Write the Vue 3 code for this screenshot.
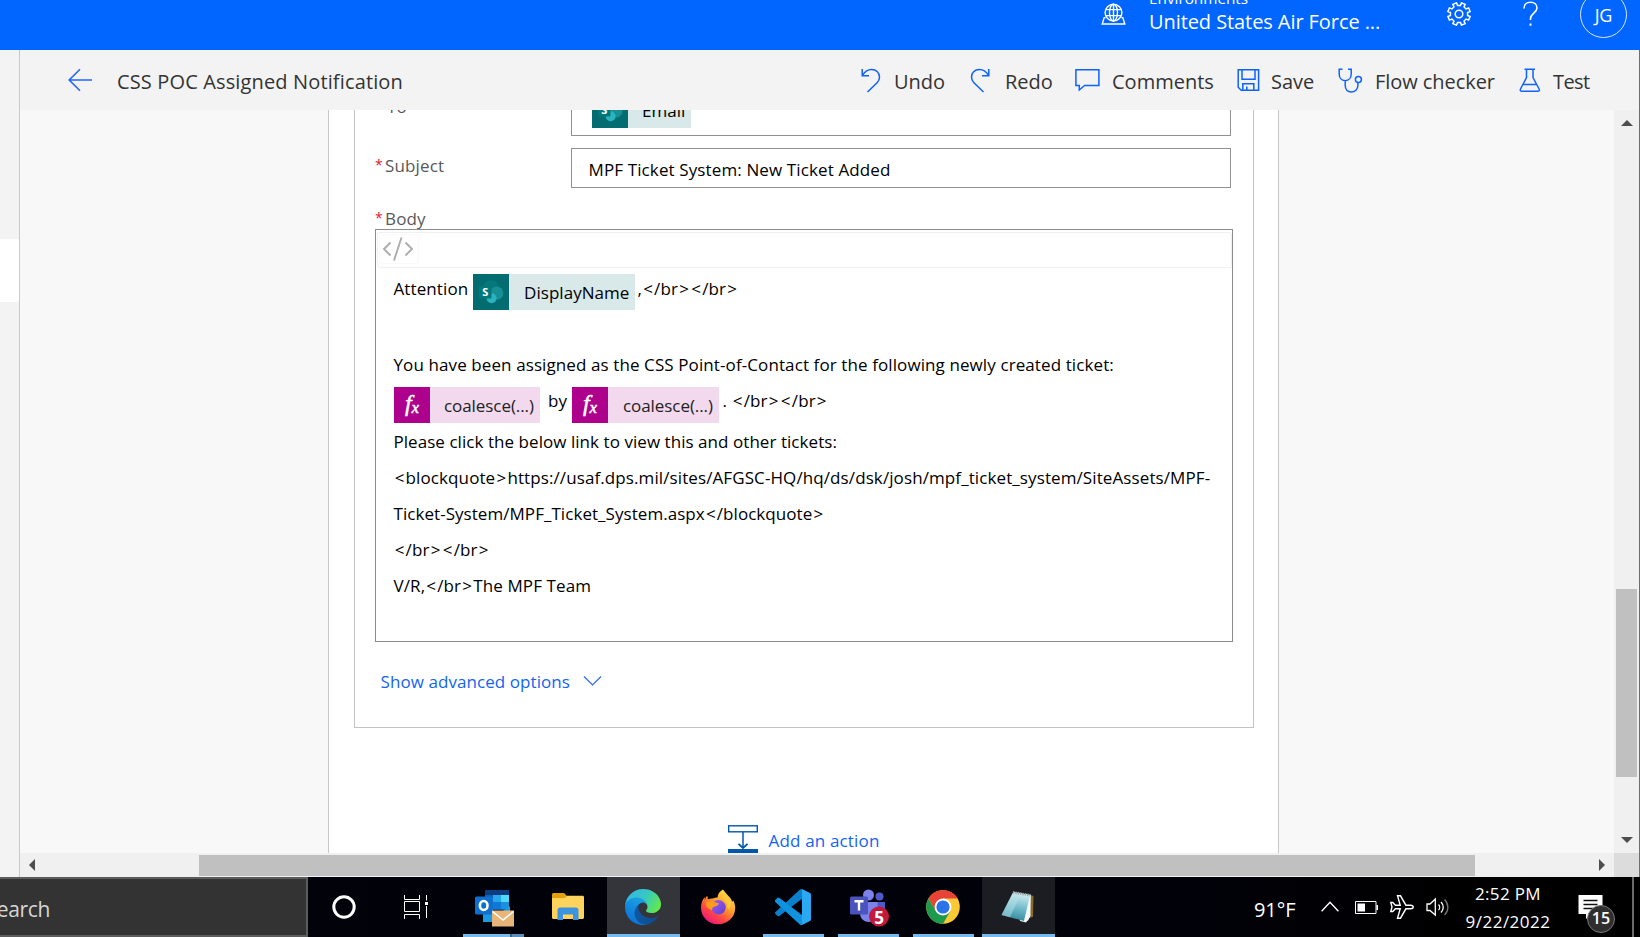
<script setup>
import { h } from 'vue'

const split = (s) => s.split(/([<>])/).filter(Boolean)

const Markup = (props) =>
  h('span', { class: 'markup' }, split(props.text).map((p) =>
    p === '<' || p === '>' ? h('span', { class: 'angle' }, p) : p))
Markup.props = ['text']

const paragraphs = [
  { text: 'Please click the below link to view this and other tickets:', tight: true },
  { text: '<blockquote>https://usaf.dps.mil/sites/AFGSC-HQ/hq/ds/dsk/josh/mpf_ticket_system/SiteAssets/MPF-' },
  { text: 'Ticket-System/MPF_Ticket_System.aspx</blockquote>', tight: true },
  { text: '</br></br>' },
  { text: 'V/R,</br>The MPF Team' }
]

const gear = (() => {
  const pts = []
  for (let k = 0; k < 8; k++) {
    const c = (k + 0.5) * 45
    for (const [r, d] of [[8.7, -13], [11.4, -10], [11.4, 10], [8.7, 13]]) {
      const a = ((c + d) * Math.PI) / 180
      pts.push((12 + r * Math.cos(a)).toFixed(2) + ',' + (12 + r * Math.sin(a)).toFixed(2))
    }
  }
  return pts.join(' ')
})()
</script>

<template>
  <div class="screen">
    <header class="top">
      <svg class="globe" width="26" height="24" viewBox="0 0 26 24">
        <g fill="none" stroke="#fff" stroke-width="1.4">
          <circle cx="12.5" cy="9.6" r="8.4" />
          <ellipse cx="12.5" cy="9.6" rx="4" ry="8.4" />
          <path d="M12.5 1.2v16.8M5 6.6h15M5 12.6h15M4.6 14.6H3.2L1.2 21h22.6l-2-6.4h-1.4" />
        </g>
      </svg>
      <div class="env">
        <div class="env-label">Environments</div>
        <div class="env-name">United States Air Force ...</div>
      </div>
      <svg class="gear" width="24" height="24" viewBox="0 0 24 24">
        <g fill="none" stroke="#fff" stroke-width="1.5">
          <polygon :points="gear" />
          <circle cx="12" cy="12" r="3.8" />
        </g>
      </svg>
      <svg class="help" width="17" height="26" viewBox="0 0 17 26">
        <path d="M2 7.4C2 3.6 4.600 1.200 8.500 1.200s6.500 2.400 6.500 5.800c0 5-6.500 5.400-6.500 10.600v1.400" fill="none" stroke="#fff" stroke-width="1.6" />
        <rect x="7.500" y="22.500" width="2" height="2.200" fill="#fff" />
      </svg>
      <div class="avatar">JG</div>
    </header>

    <div class="main">
      <nav class="rail"><div class="rail-active"></div></nav>

      <div class="work">
        <div class="bar">
          <svg class="back" width="25" height="24" viewBox="0 0 25 24">
            <path d="M24 12H1.200M12 1.200L1.200 12L12 22.800" fill="none" stroke="#2266fb" stroke-width="1.6" />
          </svg>
          <span class="title">CSS POC Assigned Notification</span>

          <svg class="i-undo" width="20" height="25" viewBox="0 0 20 25">
            <path d="M1.200 1v6.700H8M1.500 7.300C3.800 3.600 6.700 1.500 10.500 1.500c5 0 8 3.300 8 7.600 0 2.200-.8 4-2.400 5.600L6.500 24" />
          </svg>
          <span class="lbl undo">Undo</span>
          <svg class="i-redo" width="20" height="25" viewBox="0 0 20 25">
            <path d="M18.800 1v6.700H12M18.500 7.300C16.200 3.600 13.300 1.500 9.500 1.500c-5 0-8 3.300-8 7.600 0 2.200.8 4 2.400 5.600L13.500 24" />
          </svg>
          <span class="lbl redo">Redo</span>
          <svg class="i-com" width="25" height="25" viewBox="0 0 25 25">
            <path d="M.9 1.700h23v15.800H9.600L4.300 22v-4.500H.9z" />
          </svg>
          <span class="lbl comments">Comments</span>
          <svg class="i-save" width="23" height="25" viewBox="0 0 23 25">
            <path d="M1.200 1.700h20.400v20.500H4.200l-3-3zM5 1.700v9.500h13V1.700M5.800 22.200v-6.500h11v6.500M9.800 18.500v3.700" />
          </svg>
          <span class="lbl save">Save</span>
          <svg class="i-flow" width="26" height="26" viewBox="0 0 26 26">
            <path d="M4.500 1.200H1.200V6c0 4 2.500 6.700 6 6.700s6-2.700 6-6.700V1.200H10M7.200 12.700v4.600c0 4 2.400 6.700 6 6.700s6.700-2.600 6.700-6.500v-2.800" />
            <circle cx="20.400" cy="11.500" r="3" />
          </svg>
          <span class="lbl flow">Flow checker</span>
          <svg class="i-test" width="22" height="25" viewBox="0 0 22 25">
            <path d="M5.500 1.200h10.500M7.500 1.200v8.300L1.500 21c-.6 1.300 0 2.300 1.300 2.300h16c1.300 0 2-1 1.300-2.300L14 9.500V1.200M4.400 16.400h12.800" />
          </svg>
          <span class="lbl test">Test</span>
        </div>

        <div class="view">
          <div class="view-row">
            <div class="canvas">
              <div class="scope">
                <div class="card">
                  <div class="field to">
                    <label class="label to-label">To</label>
                    <div class="input to-input">
                      <span class="chip sp email">
                        <svg width="36" height="36" viewBox="0 0 36 36">
                          <circle cx="18" cy="13.700" r="7.700" fill="#04787c" /><circle cx="23.800" cy="19" r="6.600" fill="#178f95" /><circle cx="18.600" cy="24.300" r="5" fill="#2ab4c0" />
                          <rect x="6" y="12" width="12.500" height="12.500" rx="1" fill="#04777b" />
                          <text x="12.200" y="22" text-anchor="middle" class="sp-s">S</text>
                        </svg>
                        <b>Email</b>
                      </span>
                    </div>
                  </div>
                  <div class="field">
                    <label class="label"><i>*</i>Subject</label>
                    <div class="input subject">MPF Ticket System: New Ticket Added</div>
                  </div>
                  <label class="label body-label"><i>*</i>Body</label>
                  <div class="editor">
                    <div class="editor-bar">
                      <div class="code-btn">
                        <svg width="32" height="26" viewBox="0 0 32 26">
                          <path d="M8.500 6.500L2 13l6.500 6.500M23.500 6.500L30 13l-6.500 6.500M19.500 1.500L12 24.500" fill="none" stroke="#acacac" stroke-width="1.900" />
                        </svg>
                      </div>
                    </div>
                    <div class="text">
                      <div class="line first">
                        <span class="attn">Attention</span>
                        <span class="chip sp name">
                          <svg width="36" height="36" viewBox="0 0 36 36">
                            <circle cx="18" cy="13.700" r="7.700" fill="#04787c" /><circle cx="23.800" cy="19" r="6.600" fill="#178f95" /><circle cx="18.600" cy="24.300" r="5" fill="#2ab4c0" />
                            <rect x="6" y="12" width="12.500" height="12.500" rx="1" fill="#04777b" />
                            <text x="12.200" y="22" text-anchor="middle" class="sp-s">S</text>
                          </svg>
                          <b>DisplayName</b>
                        </span>
                        <Markup class="after-name" text=",</br></br>" />
                      </div>
                      <div class="line">You have been assigned as the CSS Point-of-Contact for the following newly created ticket:</div>
                      <div class="line mixed">
                        <span class="chip fx"><em>f<sub>x</sub></em><b>coalesce(...)</b></span>
                        <span class="by">by</span>
                        <span class="chip fx wide"><em>f<sub>x</sub></em><b>coalesce(...)</b></span>
                        <Markup class="after-fx" text=". </br></br>" />
                      </div>
                      <div v-for="p in paragraphs" :key="p.text" class="line" :class="{ tight: p.tight }"><Markup :text="p.text" /></div>
                    </div>
                  </div>
                  <div class="advanced">
                    <span>Show advanced options</span>
                    <svg width="19" height="12" viewBox="0 0 19 12"><path d="M1 1.500l8.500 8.500L18 1.500" fill="none" stroke="#2f6ae8" stroke-width="1.200" /></svg>
                  </div>
                </div>
                <div class="add">
                  <svg width="30" height="28" viewBox="0 0 30 28">
                    <g fill="none" stroke="#0058ad">
                      <rect x=".7" y=".8" width="28.600" height="6" stroke-width="1.400" />
                      <path d="M15 7v16" stroke-width="1.500" />
                      <path d="M10.400 18.800L15 23l4.600-4.200" stroke-width="1.800" />
                    </g>
                    <rect y="24" width="30" height="4" fill="#0058ad" />
                  </svg>
                  <span>Add an action</span>
                </div>
              </div>
            </div>
            <div class="vscroll">
              <svg width="12" height="6"><path d="M0 6L6 0l6 6z" fill="#4d4d4d" /></svg>
              <div class="vthumb"></div>
              <svg width="12" height="6"><path d="M0 0l6 6 6-6z" fill="#4d4d4d" /></svg>
            </div>
          </div>
          <div class="hscroll">
            <div class="htrack">
              <svg width="6" height="12"><path d="M6 0L0 6l6 6z" fill="#4d4d4d" /></svg>
              <div class="hthumb"></div>
              <svg class="hright" width="6" height="12"><path d="M0 0l6 6-6 6z" fill="#4d4d4d" /></svg>
            </div>
            <div class="corner"></div>
          </div>
        </div>
      </div>
    </div>

    <footer class="task">
      <div class="search"><span>Search</span></div>
      <div class="sys"><svg width="26" height="26"><circle cx="13" cy="13" r="10.200" fill="none" stroke="#fff" stroke-width="3" /></svg></div>
      <div class="sys last">
        <svg width="25" height="24" viewBox="0 0 25 24">
          <path d="M.5 0v4.500h15V0M.5 6.500h15v10H.5zM.5 24v-4.500h15V24M22.500 0v5.500M22.500 11v12" fill="none" stroke="#fff" />
          <rect x="21" y="7" width="3" height="3" fill="#fff" />
        </svg>
      </div>

      <div class="tile run grouped">
        <svg width="44" height="40" viewBox="0 0 44 40">
          <path d="M14 3h24v20H14z" fill="#0f5fb4" />
          <path d="M14 3h24v5H14z" fill="#0a3e80" />
          <path d="M22 8h8v7h-8z" fill="#28a8ea" /><path d="M30 8h8v7h-8z" fill="#50d9ff" /><path d="M22 15h8v7h-8z" fill="#0f78d4" /><path d="M30 15h8v7h-8z" fill="#1a90e0" />
          <path d="M12 20l14 8 13-9v9H27v7H12z" fill="#1a9ae4" />
          <rect x="4" y="9.500" width="18" height="18" rx="1.500" fill="#0f6fd0" />
          <ellipse cx="12.700" cy="18.500" rx="3.800" ry="4.500" fill="none" stroke="#fff" stroke-width="2.600" />
          <rect x="21" y="23.500" width="22" height="16" fill="#e8b477" />
          <path d="M21.500 24.500l10.500 8.500L42.500 24.500" fill="none" stroke="#fff" stroke-width="1.600" />
        </svg>
      </div>
      <div class="tile">
        <svg width="34" height="30" viewBox="0 0 34 30">
          <path d="M1 2.500C1 1.700 1.700 1 2.500 1H13l3 3-2.500 4H1z" fill="#e3a008" />
          <path d="M1 6h12.500L16 3.700h15.500c.8 0 1.500.6 1.500 1.400v20.400c0 .8-.7 1.500-1.500 1.500h-29C1.700 27 1 26.300 1 25.500z" fill="#ffd35c" />
          <path d="M6.500 28V18c0-1.500 1-2.500 2.500-2.500h16c1.500 0 2.500 1 2.500 2.500v10H22v-5.500H12V28z" fill="#3b94dd" />
        </svg>
      </div>
      <div class="tile run active edge">
        <svg width="36" height="36" viewBox="4.630 4.920 256 256">
          <defs>
            <linearGradient id="e1" x1="0" y1="0.500" x2="1" y2="0.500"><stop offset="0" stop-color="#0c59a4" /><stop offset="1" stop-color="#114a8b" /></linearGradient>
            <linearGradient id="e2" x1="0.700" y1="0.200" x2="0.300" y2="1"><stop offset="0" stop-color="#1b9de2" /><stop offset="1" stop-color="#0a6fd6" /></linearGradient>
            <linearGradient id="e3" x1="0" y1="0.300" x2="1" y2="0.700"><stop offset="0" stop-color="#35b7e8" /><stop offset=".5" stop-color="#36c9c0" /><stop offset="1" stop-color="#66eb45" /></linearGradient>
          </defs>
          <path fill="url(#e1)" d="M235.680 200.380a93.730 93.730 0 0 1-10.540 4.710 101.870 101.870 0 0 1-35.900 6.460c-47.320 0-88.540-32.550-88.540-74.320A31.480 31.480 0 0 1 117.130 105c-42.800 1.800-53.800 46.400-53.800 72.530 0 73.880 68.090 81.370 82.760 81.370 7.910 0 19.840-2.300 27-4.560l1.310-.44a128.340 128.340 0 0 0 66.600-52.800 4 4 0 0 0-5.320-5.640z" />
          <path fill="url(#e2)" d="M110.340 246.340A79.200 79.200 0 0 1 87.600 225a80.720 80.720 0 0 1 29.530-120c3.120-1.470 8.450-4.130 15.540-4a32.350 32.350 0 0 1 25.690 13 31.880 31.880 0 0 1 6.360 18.660c0-.21 24.460-79.600-80-79.600-43.900 0-80 41.660-80 78.210a130.150 130.150 0 0 0 12.110 56 128 128 0 0 0 156.380 67.110 75.550 75.550 0 0 1-62.780-8z" />
          <path fill="url(#e3)" d="M156.940 153.780c-.81 1.050-3.300 2.500-3.300 5.660 0 2.610 1.700 5.120 4.720 7.230 14.380 10 41.490 8.680 41.560 8.680a59.560 59.560 0 0 0 30.270-8.350A61.380 61.380 0 0 0 260.630 114c.26-22.410-8-37.310-11.340-43.910C228.090 28.760 182.350 5 132.610 5A128 128 0 0 0 4.630 131.160c.48-36.540 36.800-66.050 80-66.050 3.500 0 23.460.34 42 10.070 16.340 8.580 24.900 18.940 30.850 29.210 6.180 10.670 7.280 24.150 7.280 29.520s-2.740 13.330-7.820 19.870z" />
        </svg>
      </div>
      <div class="tile">
        <svg width="36" height="36" viewBox="0 0 36 36">
          <defs>
            <linearGradient id="f1" x1="0.850" y1="0.100" x2="0.250" y2="1"><stop offset="0" stop-color="#ffe14a" /><stop offset=".4" stop-color="#ff9a2b" /><stop offset=".7" stop-color="#ff4545" /><stop offset="1" stop-color="#e8157e" /></linearGradient>
            <linearGradient id="f2" x1="0" y1="0" x2="1" y2="1"><stop offset="0" stop-color="#a65cf0" /><stop offset="1" stop-color="#5b3fd0" /></linearGradient>
          </defs>
          <path d="M23 .5c2 2.500 3 4 5.500 6.500 2 2 3 3.700 3.700 5.700l1-1.200c1.500 3 2 5 2 7.500C35.200 28.200 27.500 35.300 18 35.300S1 28 1 18.500c0-4 1.300-8 3.800-10.500v3.200C5.500 9 6 7.800 7.300 6.700l.6 3.600c1.700-.7 3.400-1 5-.8 1.600-.8 3-1 4.600-1C17.700 5 19.800 2 23 .5z" fill="url(#f1)" />
          <circle cx="18.500" cy="18.300" r="7.200" fill="url(#f2)" />
          <path d="M6 14c2-2.500 5-2.800 8-1 1.700.9 3.200 1 4.800 1.200-.2 2-2 2.700-4 3.200-2 .6-2.800 1.600-2.600 3.600C8 20 5.500 17.500 6 14z" fill="#ff9c1d" />
          <path d="M22 9c4 1.500 5.500 5 5 9.500l2.500 2 2-8-5-6.500z" fill="#ffc83a" />
        </svg>
      </div>
      <div class="tile run">
        <svg width="36" height="36" viewBox="0 0 24 24">
          <path d="M23.150 2.587L18.210.21a1.494 1.494 0 0 0-1.705.29l-9.460 8.630-4.120-3.128a.999.999 0 0 0-1.276.057L.327 7.261A1 1 0 0 0 .326 8.740L3.899 12 .326 15.260a1 1 0 0 0 .001 1.479L1.650 17.940a.999.999 0 0 0 1.276.057l4.120-3.128 9.460 8.630a1.492 1.492 0 0 0 1.704.29l4.942-2.377A1.500 1.500 0 0 0 24 20.060V3.939a1.500 1.500 0 0 0-.850-1.352zm-5.146 14.861L10.826 12l7.178-5.448v10.896z" fill="#0a7fcb" />
          <path d="M1.650 6.059a1 1 0 0 1 1.276-.057L18 17.448V24a1.500 1.500 0 0 1-1.500-.5L.326 8.740a1 1 0 0 1 0-1.479z" fill="#0f93de" />
          <path d="M18.200.2l4.950 2.387A1.500 1.500 0 0 1 24 3.940v16.120a1.500 1.500 0 0 1-.85 1.352L18.200 23.800a1 1 0 0 1-.2-.4V.6z" fill="#2aa9f2" />
        </svg>
      </div>
      <div class="tile run">
        <svg width="42" height="40" viewBox="0 0 42 40">
          <circle cx="21.500" cy="8" r="5.500" fill="#7b83eb" /><circle cx="32.500" cy="9.500" r="4" fill="#5059c9" />
          <path d="M28 15h10v8c0 5-3 7-6 7h-4z" fill="#5059c9" />
          <path d="M13 15h17.500v11c0 6-4 9-8.500 9s-9-3-9-9z" fill="#7b83eb" />
          <rect x="3" y="9.500" width="18" height="18" rx="1.500" fill="#4b53bc" />
          <path d="M7.500 14.300h9M12 14v9.500" stroke="#fff" stroke-width="2.400" />
          <circle cx="32" cy="29.500" r="10" fill="#c4183c" />
          <text x="32" y="36.500" text-anchor="middle" class="count5">5</text>
        </svg>
      </div>
      <div class="tile run">
        <svg width="36" height="36" viewBox="-18 -18 36 36">
          <circle r="16.800" fill="#fcc934" />
          <path d="M0-8.400H14.550A16.800 16.800 0 0 0-14.550-8.400L-7.300 4.200z" fill="#e94335" />
          <path d="M-14.550-8.400A16.800 16.800 0 0 0 0 16.800L7.300 4.200-7.300 4.200z" fill="#1e9a4c" />
          <circle r="8.400" fill="#fff" /><circle r="6.600" fill="#2a74e8" />
        </svg>
      </div>
      <div class="tile run active pad">
        <svg width="36" height="36" viewBox="0 0 36 36">
          <defs><linearGradient id="n1" x1="0.600" y1="0" x2="0.400" y2="1"><stop offset="0" stop-color="#d5eef2" /><stop offset=".6" stop-color="#63b3c4" /><stop offset="1" stop-color="#2f8496" /></linearGradient></defs>
          <path d="M30 6l3.500 1-.5 21-5 1z" fill="#8a6a2a" />
          <path d="M14 3l17 3-1 22-4 5.500L20 32z" fill="#e4ecec" />
          <path d="M13 3.500l17 2.500-6 26L1.500 26z" fill="url(#n1)" />
          <path d="M13 3.500l8 1.200-11 23.500L1.500 26z" fill="#b9e2e8" opacity=".5" />
          <path d="M30 8l-6 25 4-1.500 2.500-5z" fill="#f4f7f7" />
          <path d="M13 3.300l17.500 3" stroke="#9aa3a5" stroke-width="2.600" stroke-dasharray="1.400 1" />
        </svg>
      </div>

      <span class="temp">91°F</span>
      <svg class="t-chev" width="18" height="11" viewBox="0 0 18 11"><path d="M.6 10.200L9 1.200l8.400 9" fill="none" stroke="#fff" stroke-width="1.400" /></svg>
      <svg class="t-bat" width="23" height="13" viewBox="0 0 23 13"><path d="M.5.500h20.500v12H.5z" fill="none" stroke="#fff" /><rect x="2.500" y="2.500" width="7.500" height="8" fill="#fff" /><rect x="21.500" y="4" width="1.500" height="5" fill="#fff" /></svg>
      <svg class="t-plane" width="24" height="24" viewBox="0 0 24 24"><path d="M.8 7.500h2l2.600 2.700h4.800L7.500.8h3l5.400 9.400h4.600c3.600 0 3.600 3.600 0 3.600h-4.600l-5.400 9.400h-3l2.700-9.400H5.400l-2.600 2.700h-2L2 12z" fill="none" stroke="#fff" stroke-width="1.400" /></svg>
      <svg class="t-vol" width="24" height="20" viewBox="0 0 24 20"><g fill="none" stroke="#fff" stroke-width="1.300"><path d="M1 7v6.500h3L9.300 18V2L4 7z" /><path d="M12.500 7.500c1.500 1.500 1.500 4 0 5.500M15 5c3 3 3 7.500 0 10.500" /><path d="M18.500 2.500c4.500 4.500 4.500 11 0 15.500" stroke="#777" /></g></svg>
      <div class="clock"><span class="time">2:52 PM</span><span class="date">9/22/2022</span></div>
      <div class="note">
        <svg width="25" height="26" viewBox="0 0 25 26"><path d="M.5 0h24v19H13l-5 5v-5H.5z" fill="#fff" /><path d="M5.500 5.500h14M5.500 9.500h14M5.500 13.500h10" stroke="#111" stroke-width="1.300" /></svg>
        <span class="count">15</span>
      </div>
      <div class="desk"></div>
    </footer>
  </div>
</template>

<style>
body { overflow: hidden; }
.angle { padding: 0 1.150px; }
</style>

<style scoped>
.screen { width: 1640px; height: 937px; display: flex; flex-direction: column; overflow: hidden; font-family: "Open Sans", "Noto Sans", sans-serif; font-size: 17px; letter-spacing: 0.1px; color: #000; white-space: nowrap; }
svg { display: block; flex: none; }

.top { height: 50px; flex: none; background: #0066ff; color: #fff; display: flex; align-items: flex-start; overflow: hidden; }
.globe { margin: 3px 0 0 1101px; }
.env { width: 297px; padding-left: 22px; box-sizing: border-box; }
.env-label { font-size: 15.300px; line-height: 20px; margin-top: -12px; letter-spacing: 0; }
.env-name { font-size: 20px; line-height: 28px; letter-spacing: -0.080px; }
.gear { margin: 2px 0 0 23px; }
.help { margin: 1px 0 0 51px; }
.avatar { width: 47px; height: 47px; box-sizing: border-box; border: 1px solid #dbe8ff; border-radius: 50%; margin: -9px 0 0 41px; text-align: center; font-size: 18px; line-height: 47px; letter-spacing: -0.2px; }

.main { height: 827px; flex: none; display: flex; box-sizing: border-box; border-right: 1px solid #6e6e6e; }
.rail { width: 19px; border-right: 1px solid #c9c9c9; background: #f3f3f3; flex: none; }
.rail-active { width: 19px; height: 63px; margin-top: 189px; background: #fff; border-radius: 0 2px 2px 0; }
.work { flex: 1; display: flex; flex-direction: column; min-width: 0; }
.bar { height: 60px; flex: none; background: #f3f3f3; display: flex; align-items: flex-start; font-size: 20px; line-height: 64px; color: #333; }
.bar svg { fill: none; stroke: #0f62fe; stroke-width: 1.500; margin-top: 18px; }
.bar .back { margin-left: 48px; }
.title { width: 717px; margin-left: 24px; letter-spacing: 0.140px; }
.lbl { letter-spacing: 0; }
.bar .i-undo { margin-left: 27px; margin-right: 13px; }
.undo { width: 76px; }
.i-redo { margin-right: 15px; }
.redo { width: 70px; }
.i-com { margin-right: 12px; }
.comments { width: 125px; }
.i-save { margin-right: 11px; }
.save { width: 67px; }
.i-flow { margin-right: 11px; }
.flow { width: 144px; letter-spacing: -0.060px; }
.i-test { margin-right: 12px; }
.test { letter-spacing: -0.600px; }

.view { height: 767px; display: flex; flex-direction: column; }
.view-row { height: 743px; display: flex; }
.canvas { width: 1594px; height: 743px; background: #f8f8f8; overflow: hidden; }
.scope { width: 949px; height: 743px; margin-left: 308px; background: #fff; border: solid #c8c8c8; border-width: 0 1px; overflow: hidden; }
.card { width: 878px; height: 617px; margin-left: 25px; border: 1px solid #c3c3c3; border-top: 0; display: flex; flex-direction: column; align-items: flex-start; padding-left: 20px; }
.field { display: flex; align-items: flex-start; height: 40px; }
.field.to { height: 26px; margin-bottom: 12px; overflow: hidden; }
.label { width: 196px; line-height: 24px; color: #595959; margin-top: 6px; letter-spacing: 0.150px; display: flex; }
.label i { font-style: normal; color: #e0142e; width: 10px; letter-spacing: 0; font-size: 14px; line-height: 22px; }
.to-label { margin-top: -15px; width: 184px; padding-left: 12px; }
.input { width: 660px; box-sizing: border-box; border: 1px solid #919191; }
.to-input { height: 26px; border-top: 0; padding-left: 20px; }
.to-input .chip { margin-top: -18px; }
.subject { height: 40px; line-height: 38px; padding: 2px 0 0 16.500px; letter-spacing: 0.120px; }
.body-label { margin-top: 19px; }
.editor { width: 858px; height: 413px; margin-top: -2px; box-sizing: border-box; border: 1px solid #8c8c8c; }
.editor-bar { height: 36px; box-sizing: border-box; margin: 2px 0 0 1px; border: 1px solid #f0f0f0; border-radius: 3px; padding: 1px; }
.code-btn { width: 40px; height: 30px; box-sizing: border-box; border: 1px solid #f9f9f9; border-radius: 3px; padding: 1px 0 0 2px; }
.text { padding: 3px 0 0 17.500px; }
.line { height: 36px; line-height: 36px; display: flex; align-items: flex-start; }
.line.first { height: 76px; }
.line.mixed { height: 41px; }
.line.tight { letter-spacing: 0.050px; }
.attn { width: 79.500px; }
.chip { display: inline-flex; height: 36px; line-height: 38px; margin-top: 3px; flex: none; }
.chip b { font-weight: 400; }
.sp { background: #d9e8e8; }
.sp svg { background: #036c70; }
.name { width: 162px; }
.name b { padding-left: 15px; letter-spacing: 0.050px; }
.email { width: 99px; display: flex; }
.email b { padding-left: 14px; letter-spacing: 0; }
.sp-s { font: 700 11px "Open Sans", sans-serif; fill: #fff; letter-spacing: 0; }
.mixed .chip { margin-top: 4px; }
.mixed .chip:first-child { margin-left: 0.500px; }
.fx { background: #f2d9ee; width: 146px; }
.fx.wide { width: 147px; }
.fx b { padding-left: 14px; letter-spacing: -0.070px; color: #222; }
.fx.wide b { padding-left: 15px; }
.fx em { width: 36px; background: #ad008c; color: #fff; text-align: center; font: italic 400 24px/32px "Liberation Serif", serif; letter-spacing: 0; -webkit-text-stroke: 0.500px #fff; }
.fx sub { font-size: 17px; line-height: 0; vertical-align: -2px; }
.by { width: 24px; margin-left: 8px; }
.after-name { margin-left: 2.500px; }
.after-fx { margin-left: 3.500px; }
.advanced { display: flex; align-items: center; height: 24px; line-height: 24px; margin: 28px 0 0 5.500px; color: #1264f4; gap: 13px; letter-spacing: 0.070px; }
.advanced svg { margin-top: -2px; }
.add { display: flex; align-items: flex-start; margin: 97px 0 0 399px; color: #1264f4; gap: 10.500px; letter-spacing: 0.170px; line-height: 24px; }
.add span { margin-top: 4px; }

.vscroll { width: 25px; background: #f0f0f0; display: flex; flex-direction: column; align-items: center; padding: 10px 0; box-sizing: border-box; }
.vthumb { width: 21px; height: 188px; background: #c0c0c0; margin: 463px 0 60px; flex: none; }
.hscroll { height: 24px; display: flex; }
.htrack { width: 1594px; background: #f0f0f0; display: flex; align-items: center; padding-left: 9px; box-sizing: border-box; }
.hthumb { width: 1276px; height: 21px; margin-left: 164px; background: #c0c0c0; }
.hright { margin-left: 124px; }
.corner { width: 25px; background: #dcdcdc; }

.task { height: 60px; flex: none; display: flex; align-items: flex-start; background: linear-gradient(90deg, #02020b 0, #01010a 70%, #000 90%); color: #fff; letter-spacing: 0; }
.search { width: 308px; height: 60px; box-sizing: border-box; border: 2px solid #5c5c5c; border-left: 0; background: #333; color: #d6d6d6; font-size: 21px; line-height: 60px; overflow: hidden; }
.search span { margin-left: -14.500px; letter-spacing: -0.300px; }
.sys { width: 72px; height: 60px; display: flex; align-items: center; justify-content: center; }
.sys.last { margin-right: 5px; }
.tile { width: 73px; height: 60px; margin-right: 2px; padding-right: 2px; box-sizing: border-box; display: flex; align-items: center; justify-content: center; position: relative; }
.run::after { content: ""; position: absolute; left: 6px; right: 6px; bottom: 0; height: 3px; background: #76b9ed; }
.grouped::after { background: linear-gradient(90deg, #76b9ed 47px, #3d6387 47px, #3d6387 49px, #5b8fb9 49px); }
.active::after { left: 0; right: 0; }
.edge { background: #34353b; }
.pad { background: #1c1d23; margin-right: 0; }
.temp { width: 67px; margin-left: 199px; font-size: 20px; line-height: 65px; letter-spacing: -0.100px; }
.t-chev { margin: 24px 16px 0 0; }
.t-bat { margin: 24px 12px 0 0; }
.t-plane { margin: 18px 12px 0 0; }
.t-vol { margin: 20px 11px 0 0; }
.clock { width: 94px; height: 60px; display: flex; flex-direction: column; align-items: center; line-height: 28px; padding-top: 3px; box-sizing: border-box; }
.time { letter-spacing: 0.350px; }
.date { letter-spacing: 0.500px; }
.note { margin: 18px 0 0 23px; width: 54px; position: relative; }
.count { position: absolute; left: 9px; top: 10px; width: 28px; height: 28px; box-sizing: border-box; border: 1px solid #777; border-radius: 50%; background: #2f2f2f; text-align: center; font-size: 16px; font-weight: 600; line-height: 25px; }
.count5 { font: 700 17px "Open Sans", sans-serif; fill: #fff; }
.desk { width: 2px; height: 60px; background: #6a6a6a; }
</style>
